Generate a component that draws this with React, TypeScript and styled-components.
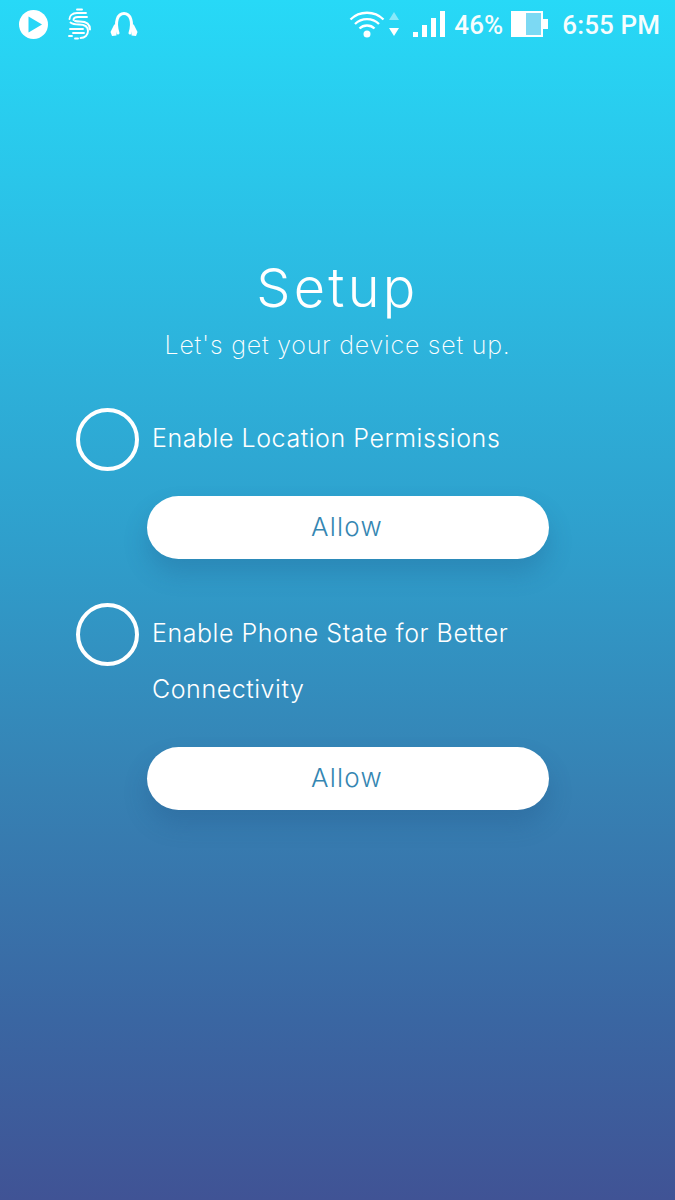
import * as React from "react"
import styled, { createGlobalStyle } from "styled-components"

const GlobalStyle = createGlobalStyle`
  html, body {
    margin: 0;
    padding: 0;
  }
  body {
    font-family: "Inter", "Liberation Sans", sans-serif;
  }
`

const Page = styled.div`
  width: 675px;
  height: 1200px;
  overflow: hidden;
  color: #fff;
  background: linear-gradient(180deg, #27d9f7 0%, #2bbfe5 20%, #2f9fcc 45%, #3682b4 65%, #3a66a2 85%, #405395 100%);
`

const StatusBar = styled.div`
  display: flex;
  align-items: center;
  justify-content: space-between;
  height: 48px;
  padding: 0 15px 0 18px;
`

const StatusGroup = styled.div`
  display: flex;
  align-items: center;
`

const StatusSlot = styled.span<{ $left: number }>`
  display: flex;
  margin-left: ${(p) => p.$left}px;
`

const StatusText = styled.span`
  padding-top: 2px;
  font-family: "Roboto", sans-serif;
  font-size: 26px;
  font-weight: 500;
  letter-spacing: 0.1px;
  line-height: 46px;
  opacity: 0.96;
`

const Content = styled.div`
  padding-top: 208px;
`

const Title = styled.h1`
  margin: 0;
  font-size: 54px;
  font-weight: 350;
  line-height: 64px;
  letter-spacing: 3.3px;
  text-align: center;
`

const Subtitle = styled.p`
  margin: 9px 0 0;
  font-size: 25px;
  font-weight: 250;
  line-height: 32px;
  letter-spacing: 0.78px;
  text-align: center;
`

const Steps = styled.div`
  margin-top: 47px;
  padding-left: 76px;
`

const Step = styled.div`
  margin-bottom: 44px;
`

const StepRow = styled.div`
  display: flex;
  align-items: flex-start;
  gap: 13px;
`

const Circle = styled.div`
  box-sizing: border-box;
  flex: none;
  width: 63px;
  height: 63px;
  border: 4px solid #fff;
  border-radius: 50%;
`

const StepLabel = styled.div`
  width: 385px;
  padding: 2px 0 5px;
  font-size: 25px;
  font-weight: 350;
  line-height: 56px;
  letter-spacing: 0.55px;
`

const AllowButton = styled.button`
  display: block;
  width: 402px;
  height: 63px;
  margin: 25px 0 0 71px;
  padding: 0 2px 3px 0;
  border: 0;
  border-radius: 32px;
  background: #fff;
  color: #3586b2;
  font-family: inherit;
  font-size: 26px;
  font-weight: 350;
  letter-spacing: 1.2px;
  box-shadow: 0 14px 24px rgba(30, 70, 120, 0.24);
`

const PlayIcon = () => (
  <svg width="31" height="31" viewBox="0 0 31 31">
    <circle cx="15.5" cy="15.5" r="14.5" fill="#fff" />
    <path d="M10.5 7.5 L24 15.5 L10.5 23.5 Z" fill="#28d6f7" />
  </svg>
)

const DashIcon = () => (
  <svg width="24" height="32" viewBox="0 0 24 32" fill="none" stroke="#fff" strokeWidth="1.9" strokeLinecap="round">
    <path d="M10 1.500h5" />
    <path d="M19 5H10C5 5 2.500 8 2.500 11" />
    <path d="M20 9H11C8 9 6.500 10.500 6.500 12" />
    <path d="M3.500 14.500C6 16.500 8 16.500 12 16.500C18 16.500 21 19 21 23C21 27 18 30 13.500 30" />
    <path d="M8 13C9 13.300 11 13.500 13 13.500C19 13.500 23 16 23 21.500" />
    <path d="M3 21h13" />
    <path d="M6 25h11" />
    <path d="M2 28h3" />
    <path d="M8 30.500h3" />
  </svg>
)

const HeadphonesIcon = () => (
  <svg width="28" height="25" viewBox="0 0 28 25">
    <path d="M8 21C4.500 10 7.500 1.500 14 1.500C20.500 1.500 23.500 10 20 21" fill="none" stroke="#fff" strokeWidth="3" strokeLinecap="round" />
    <path d="M4.500 12L0.500 20L2 24L6.500 23.500L6.500 17Z" fill="#fff" />
    <path d="M23.500 12L27.500 20L26 24L21.500 23.500L21.500 17Z" fill="#fff" />
  </svg>
)

const WifiIcon = () => (
  <svg width="36" height="30" viewBox="0 0 36 30" fill="none" stroke="#fff" strokeWidth="2.300">
    <path d="M1.500 10.500C10.500 1.500 25.500 1.500 34.500 10.500" />
    <path d="M6 15C12.500 8.500 23.500 8.500 30 15" />
    <path d="M10.500 19.500C14.500 15.500 21.500 15.500 25.500 19.500" />
    <circle cx="18" cy="25" r="3.500" fill="#fff" stroke="none" />
  </svg>
)

const ArrowsIcon = () => (
  <svg width="12" height="26" viewBox="0 0 12 26">
    <path d="M6 1 L11 9 H1 Z" fill="#fff" fillOpacity="0.45" />
    <path d="M6 25 L11 17 H1 Z" fill="#fff" />
  </svg>
)

const SignalIcon = () => (
  <svg width="32" height="28" viewBox="0 0 32 28" fill="#fff">
    <rect x="0" y="22" width="5" height="5" />
    <rect x="9" y="15" width="5" height="12" />
    <rect x="18" y="8" width="5" height="19" />
    <rect x="27" y="1" width="5" height="26" />
  </svg>
)

const BatteryIcon = () => (
  <svg width="37" height="26" viewBox="0 0 37 26">
    <rect x="0" y="0" width="32" height="26" fill="#fff" />
    <rect x="15" y="2" width="15" height="22" fill="#7cd9f3" />
    <rect x="32" y="8" width="5" height="10" fill="#fff" />
  </svg>
)

const App = (): React.ReactElement => {
  return (
    <Page>
      <GlobalStyle />
      <StatusBar>
        <StatusGroup>
          <PlayIcon />
          <StatusSlot $left={18}>
            <DashIcon />
          </StatusSlot>
          <StatusSlot $left={19}>
            <HeadphonesIcon />
          </StatusSlot>
        </StatusGroup>
        <StatusGroup>
          <WifiIcon />
          <StatusSlot $left={3}>
            <ArrowsIcon />
          </StatusSlot>
          <StatusSlot $left={13}>
            <SignalIcon />
          </StatusSlot>
          <StatusSlot $left={9}>
            <StatusText>46%</StatusText>
          </StatusSlot>
          <StatusSlot $left={8}>
            <BatteryIcon />
          </StatusSlot>
          <StatusSlot $left={14}>
            <StatusText>6:55 PM</StatusText>
          </StatusSlot>
        </StatusGroup>
      </StatusBar>
      <Content>
        <Title>Setup</Title>
        <Subtitle>Let's get your device set up.</Subtitle>
        <Steps>
          <Step>
            <StepRow>
              <Circle />
              <StepLabel>Enable Location Permissions</StepLabel>
            </StepRow>
            <AllowButton>Allow</AllowButton>
          </Step>
          <Step>
            <StepRow>
              <Circle />
              <StepLabel>Enable Phone State for Better Connectivity</StepLabel>
            </StepRow>
            <AllowButton>Allow</AllowButton>
          </Step>
        </Steps>
      </Content>
    </Page>
  )
}

export default App
